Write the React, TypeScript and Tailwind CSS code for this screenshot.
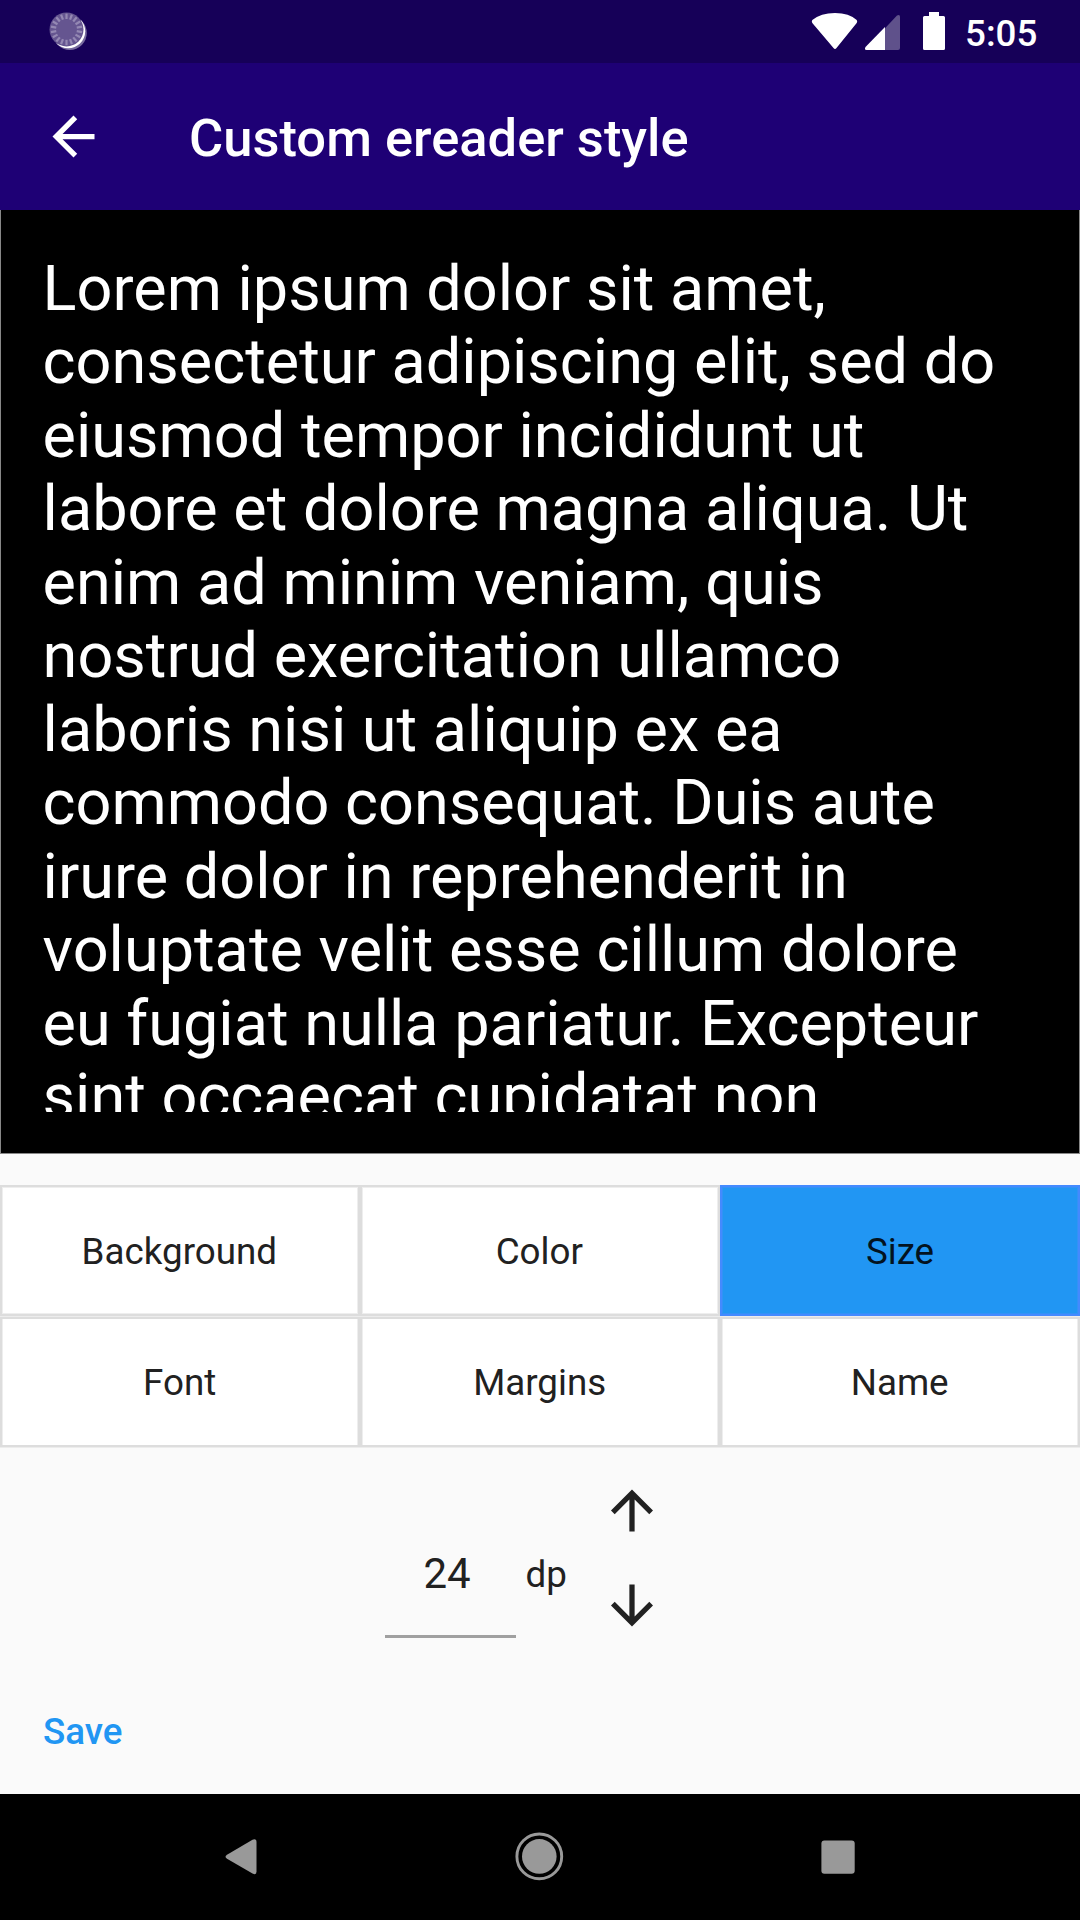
import React from "react";

const LINES = [
  "Lorem ipsum dolor sit amet,",
  "consectetur adipiscing elit, sed do",
  "eiusmod tempor incididunt ut",
  "labore et dolore magna aliqua. Ut",
  "enim ad minim veniam, quis",
  "nostrud exercitation ullamco",
  "laboris nisi ut aliquip ex ea",
  "commodo consequat. Duis aute",
  "irure dolor in reprehenderit in",
  "voluptate velit esse cillum dolore",
  "eu fugiat nulla pariatur. Excepteur",
  "sint occaecat cupidatat non",
];

const TICKS = Array.from({ length: 18 }, (_, i) => i * 20);

function StatusBar() {
  return (
    <header className="flex h-[63px] items-start bg-[#160058] text-white">
      <svg className="ml-[48px] mt-[11px] h-[41px] w-[41px]" viewBox="0 0 41 41">
        <circle cx="21.8" cy="22" r="17" fill="#fff" opacity="0.42" />
        <circle cx="20.2" cy="20.2" r="17" fill="#fff" />
        <path d="M1 1H30L33 9L8 33H1Z" fill="#160058" />
        <circle cx="18.5" cy="18.4" r="17" fill="#655590" />
        {TICKS.map((a) => (
          <path key={a} d="M18.5 2.6V8" stroke="#9488b3" strokeWidth="2.2" transform={`rotate(${a} 18.5 18.4)`} />
        ))}
      </svg>
      <div className="ml-auto flex">
        <svg className="mt-[12px] h-[38px] w-[47px]" viewBox="0 0 47 38" fill="#fff">
          <path d="M1.3 8.1Q9.7 1 24 1T45.7 8.1Q46.7 9.5 45.7 11L25.5 36Q24 37.8 22.5 36L1.3 11Q.3 9.5 1.3 8.1Z" />
        </svg>
        <svg className="ml-[6px] mt-[14px] h-[37px] w-[37px]" viewBox="0 0 37 37">
          <path d="M21 14.2L33 1.6Q36 0 36 3V34Q36 36 34 36H21Z" fill="#5f518b" />
          <path d="M21 13V36H2.5Q0 36 1.5 33Z" fill="#fff" />
        </svg>
        <svg className="ml-[22px] mt-[12px] h-[38px] w-[22px]" viewBox="0 0 22 38" fill="#fff">
          <path d="M6 0H16V4H20.5Q22 4 22 5.5V36.5Q22 38 20.5 38H1.5Q0 38 0 36.5V5.5Q0 4 1.5 4H6Z" />
        </svg>
        <span className="ml-[20px] mr-[42px] mt-[12px] w-[73px] whitespace-nowrap text-[36.75px] font-medium leading-[43px]">5:05</span>
      </div>
    </header>
  );
}

function AppBar() {
  return (
    <div className="flex h-[147px] items-center bg-[#1e0075] text-white">
      <svg className="ml-[42px] h-[63px] w-[63px]" viewBox="0 0 24 24" fill="currentColor">
        <path d="M20 11H7.83l5.59-5.59L12 4l-8 8 8 8 1.41-1.41L7.83 13H20v-2z" />
      </svg>
      <h1 className="ml-[84px] pt-[2px] text-[52.5px] font-medium leading-[62px]">Custom ereader style</h1>
    </div>
  );
}

function Tabs() {
  return (
    <div className="mt-[31px] text-[36.75px] text-[#212121]">
      <div className="grid h-[131px] grid-cols-3">
        {["Background", "Color", "Size"].map((t) => (
          <button
            key={t}
            className={
              t === "Size"
                ? "border-2 border-[#448aff] bg-[#2196f3] pt-[2px] text-[#03131f] shadow-[inset_0_0_0_1px_#3392f6]"
                : "border-2 border-[#dddddd] bg-white pr-[1.4px] pt-[2px] shadow-[inset_0_0_0_1px_#eeeeee]"
            }
          >
            {t}
          </button>
        ))}
      </div>
      <div className="border-y border-[#ececec]">
        <div className="grid h-[130px] grid-cols-3">
          {["Font", "Margins", "Name"].map((t) => (
            <button
              key={t}
              className="border-2 border-[#dddddd] bg-white pr-[0.7px] pt-[2px] shadow-[inset_1px_0_0_0_#eeeeee,inset_-1px_0_0_0_#eeeeee]"
            >
              {t}
            </button>
          ))}
        </div>
      </div>
    </div>
  );
}

function SizeEditor() {
  return (
    <div className="flex h-[220px] pl-[385px] text-[#212121]">
      <div className="mt-[84px] h-[106px] w-[131px] border-b-[3px] border-[#a0a0a0] text-center text-[42px] leading-[84px]">
        <span className="mr-[7px]">24</span>
      </div>
      <span className="ml-[9.5px] mt-[105px] w-[42.5px] text-[36.75px] leading-[43px]">dp</span>
      <div className="ml-[32px] flex flex-col gap-[31.3px] pt-[31.4px]">
        <svg className="h-[63px] w-[63px]" viewBox="-0.19 0 24 24" fill="currentColor">
          <path d="M4 12l1.41 1.41L11 7.83V20h2V7.83l5.58 5.59L20 12l-8-8-8 8z" />
        </svg>
        <svg className="h-[63px] w-[63px]" viewBox="-0.19 0 24 24" fill="currentColor">
          <path d="M20 12l-1.41-1.41L13 16.17V4h-2v12.17l-5.58-5.59L4 12l8 8 8-8z" />
        </svg>
      </div>
    </div>
  );
}

function NavBar() {
  return (
    <nav className="mt-auto flex h-[126px] items-center justify-between bg-black px-[206px]">
      <svg className="h-[70px] w-[70px]" viewBox="0 0 70 70" fill="#999">
        <path d="M21 32.7L46.5 17.7Q50.5 16.2 50.5 20V49.5Q50.5 53.5 46.5 51.5L21 36.8Q18 34.8 21 32.7Z" />
      </svg>
      <svg className="h-[70px] w-[70px]" viewBox="0 0 70 70">
        <circle cx="34.3" cy="34.4" r="17.3" fill="#999" />
        <circle cx="34.3" cy="34.4" r="22.4" fill="none" stroke="#999" strokeWidth="2.9" />
      </svg>
      <svg className="h-[70px] w-[70px]" viewBox="0 0 70 70">
        <rect x="17.4" y="18.4" width="33.3" height="33.3" rx="3" fill="#999" />
      </svg>
    </nav>
  );
}

export default function App() {
  return (
    <div className="flex h-[1920px] w-[1080px] flex-col overflow-hidden bg-[#fafafa] font-[Roboto,sans-serif]">
      <StatusBar />
      <AppBar />
      <main>
        <section className="h-[944px] border-x border-b border-[#888888] bg-black pl-[41.6px] pr-[42px] pt-[41.8px] text-[63px] text-white">
          <div className="h-[860.2px] overflow-hidden">
            {LINES.map((l) => (
              <p key={l} className="h-[73.5px] whitespace-nowrap leading-[73.5px]">
                {l}
              </p>
            ))}
          </div>
        </section>
        <Tabs />
        <SizeEditor />
        <button className="ml-[43px] mt-[42px] block text-[36.75px] font-medium leading-[43px] text-[#2196f3]">Save</button>
      </main>
      <NavBar />
    </div>
  );
}
